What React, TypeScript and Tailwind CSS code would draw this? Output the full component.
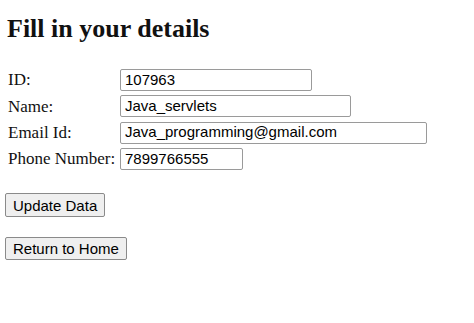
import React from "react";

export default function App() {
  const rows: { label: string; value: string; w: string }[] = [
    { label: "ID:", value: "107963", w: "w-[192px]" },
    { label: "Name:", value: "Java_servlets", w: "w-[231px]" },
    { label: "Email Id:", value: "Java_programming@gmail.com", w: "w-[307px]" },
    { label: "Phone Number:", value: "7899766555", w: "w-[123px]" },
  ];
  return (
    <div className="w-[474px] h-[323px] bg-white text-[#111] overflow-hidden flex flex-col">
      <h1 className="font-['Liberation_Serif',serif] font-bold text-[26px] leading-[30px] pt-[14px] pl-[7px] m-0">
        Fill in your details
      </h1>
      <div className="grid grid-cols-[112px_auto] auto-rows-[26.33px] items-start mt-[25px] pl-[8px]">
        {rows.map((r) => (
          <React.Fragment key={r.label}>
            <div className="h-[22px] flex items-center font-['Liberation_Serif',serif] text-[17px] whitespace-nowrap">
              {r.label}
            </div>
            <input
              readOnly
              value={r.value}
              className={`${r.w} h-[22px] border border-[#9a9a9a] rounded-[2px] pl-[4px] pr-[2px] font-['Liberation_Sans',Arial,sans-serif] text-[15px] text-black bg-white outline-none`}
            />
          </React.Fragment>
        ))}
      </div>
      <div className="flex pl-[5px] mt-[19px]">
        <button className="flex items-center h-[24px] px-[7px] bg-[#efefef] border border-[#8a8a8a] rounded-[2px] font-['Liberation_Sans',Arial,sans-serif] text-[15px] leading-none text-black">
          Update Data
        </button>
      </div>
      <div className="flex pl-[5px] mt-[20px]">
        <button className="flex items-center h-[23px] px-[7px] bg-[#efefef] border border-[#8a8a8a] rounded-[2px] font-['Liberation_Sans',Arial,sans-serif] text-[15px] leading-none text-black">
          Return to Home
        </button>
      </div>
    </div>
  );
}
